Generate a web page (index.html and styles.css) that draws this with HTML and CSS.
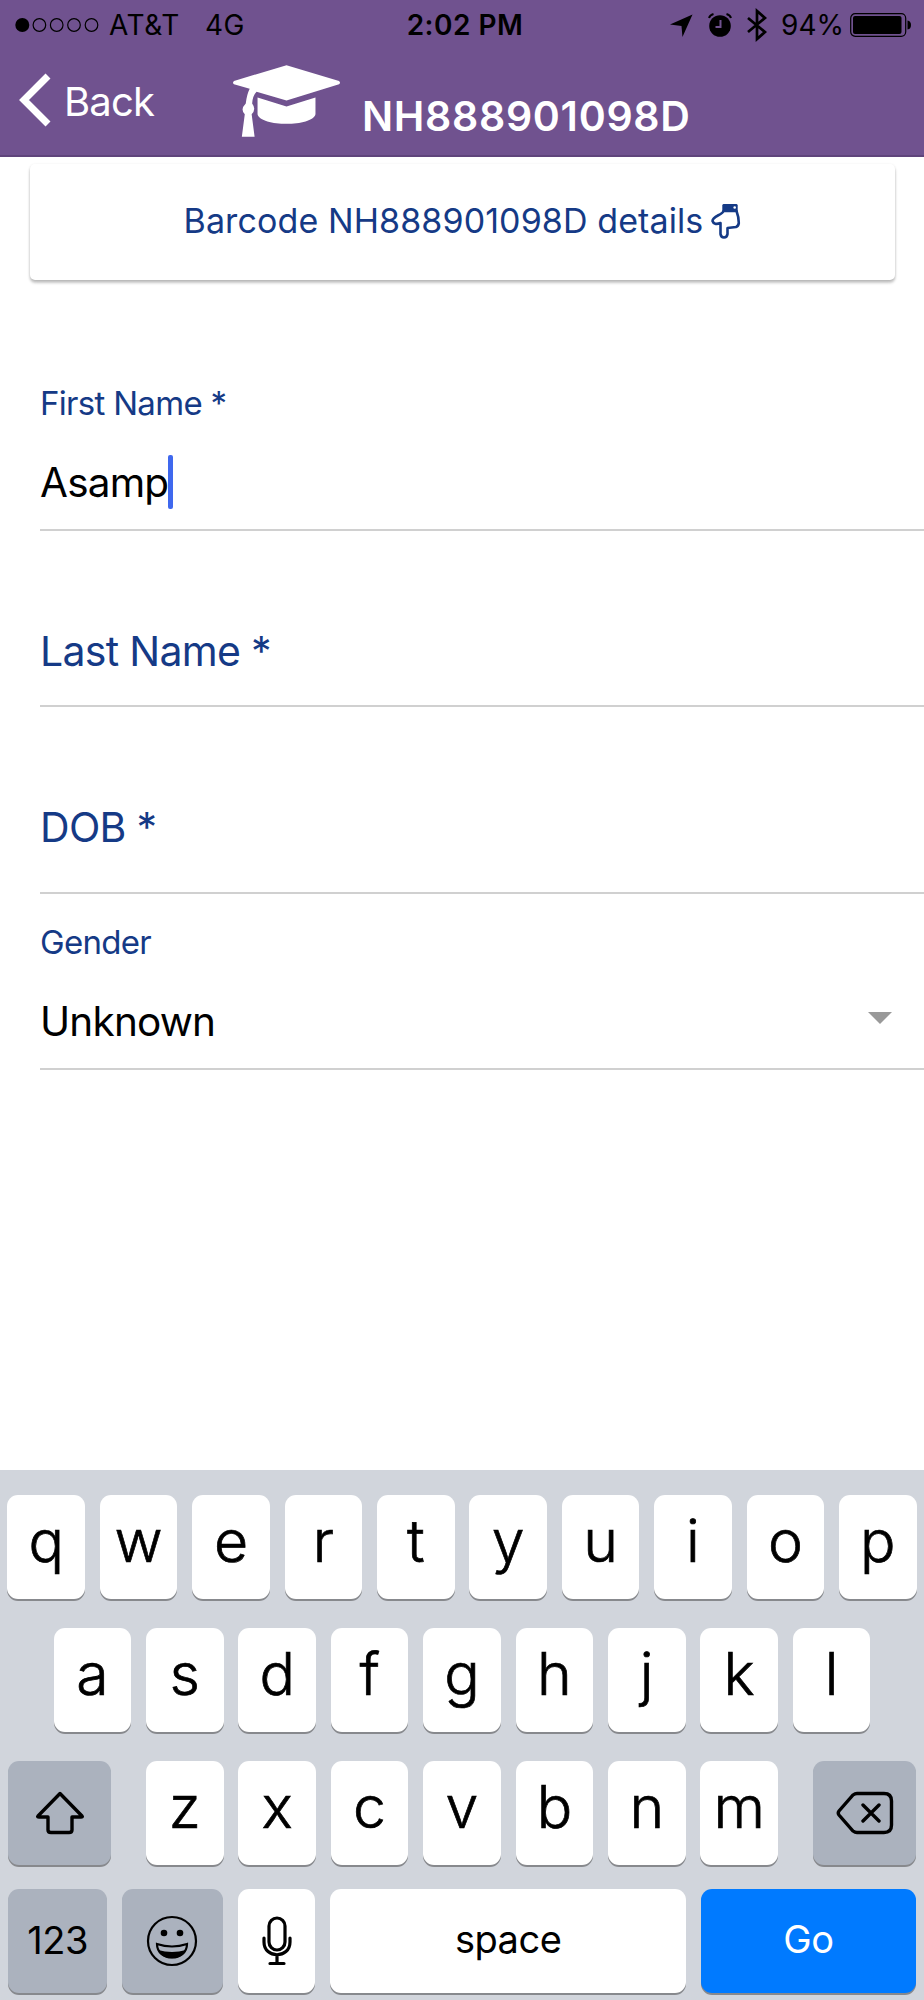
FILE: index.html
```html
<!DOCTYPE html>
<html lang="en">
<head>
<meta charset="utf-8">
<title>NH888901098D</title>
<link rel="stylesheet" href="styles.css">
</head>
<body>
<div class="screen">
  <header class="header">
    <div class="status">
      <div class="status-left">
        <svg class="signal" width="84" height="16" viewBox="0 0 84 16"><circle cx="7.3" cy="8" r="7"/><g fill="none" stroke="#000" stroke-width="1.2"><circle cx="24.4" cy="8" r="6.3"/><circle cx="41.7" cy="8" r="6.3"/><circle cx="59" cy="8" r="6.3"/><circle cx="76.5" cy="8" r="6.3"/></g></svg>
        <span class="carrier">AT&amp;T</span><span class="network">4G</span>
      </div>
      <span class="time">2:02 PM</span>
      <div class="status-right">
        <svg width="23" height="23" viewBox="0 0 24 24"><path d="M23.500 .5 13 24 12 12.500 0 11Z"/></svg>
        <svg width="26" height="26" viewBox="0 0 26 26"><circle cx="13" cy="14" r="10.800"/><path d="M13.500 8v7H8.500" fill="none" stroke="#70528f" stroke-width="2"/><path d="M2 6Q3 3 6.500 2M24 6Q23 3 19.500 2" fill="none" stroke="#000" stroke-width="2"/></svg>
        <svg width="20" height="34" viewBox="0 0 20 34"><path d="M1 10 18 24 10 31V3L18 10 1 24" fill="none" stroke="#000" stroke-width="2.700"/></svg>
        <span class="percent">94%</span>
        <svg width="62" height="24" viewBox="0 0 62 24"><rect x=".7" y=".7" width="55" height="22.600" rx="4.500" fill="none" stroke="#000" stroke-width="1.200"/><rect x="3" y="3" width="48.500" height="18" rx="2"/><path d="M57.500 7.500Q61 8 61 12T57.500 16.500Z"/></svg>
      </div>
    </div>
    <div class="navbar">
      <svg class="chevron" width="32" height="54" viewBox="0 0 32 54"><path d="M29 3 5 27 29 51" fill="none" stroke="#fff" stroke-width="7"/></svg>
      <span class="back">Back</span>
      <svg class="cap" width="108" height="73" viewBox="0 0 110 74"><path fill="#fff" d="M54.500 0 108 16Q110 18 108 19.500L54.500 36 24 27Q20 31 19.500 39Q24 45 19 50L22 73H9L12 50Q7 45 13 39Q14 30 17 24L1 19.500Q-1 18 1 16ZM25 33 54.500 42 84 33V50C81 63 28 63 25 50Z"/></svg>
      <h1 class="title">NH888901098D</h1>
    </div>
  </header>

  <main class="form">
    <div class="card">
      <span class="card-text">Barcode NH888901098D details</span>
      <svg class="hand" width="30" height="36" viewBox="0 0 30 36"><path d="M12.500 8C11.500 12 1.500 13 1.500 18Q3 22.500 9.500 20V31Q10 34.500 13 34.500T16.500 31V25L25 24Q27.500 23 27.800 20Q27.800 14 25.500 8Z" fill="none" stroke="#153a86" stroke-width="2.600" stroke-linejoin="round"/><path d="M12.500 1H25.500Q26.700 1 26.700 2.500V9H11.300V2.500Q11.300 1 12.500 1Z" fill="#153a86"/><circle cx="23.700" cy="4.500" r="1.300" fill="#fff"/></svg>
    </div>
    <div class="field field-first">
      <label class="label-small first-label">First Name *</label>
      <div class="value"><span class="first-value">Asamp</span><i class="caret"></i></div>
    </div>
    <div class="field field-last"><label class="label-large last-label">Last Name *</label></div>
    <div class="field field-dob"><label class="label-large dob-label">DOB *</label></div>
    <div class="field field-gender">
      <label class="label-small gender-label">Gender</label>
      <div class="value"><span class="gender-value">Unknown</span><svg class="arrow" width="24" height="12" viewBox="0 0 24 12"><path d="M0 0H24L12 12Z" fill="#999"/></svg></div>
    </div>
  </main>

  <section class="keyboard">
    <div class="row row-top"><b class="key">q</b><b class="key">w</b><b class="key">e</b><b class="key">r</b><b class="key">t</b><b class="key">y</b><b class="key">u</b><b class="key">i</b><b class="key">o</b><b class="key">p</b></div>
    <div class="row row-home"><b class="key">a</b><b class="key">s</b><b class="key">d</b><b class="key">f</b><b class="key">g</b><b class="key">h</b><b class="key">j</b><b class="key">k</b><b class="key">l</b></div>
    <div class="row row-spread">
      <b class="key key-dark key-side"><svg width="50" height="44" viewBox="0 0 50 44"><path d="M25 2.500 47 25Q48 26 46 26H37V39Q37 41.500 34 41.500H16Q13 41.500 13 39V26H4Q2 26 3 25Z" fill="none" stroke="#000" stroke-width="3.400" stroke-linejoin="round"/></svg></b>
      <div class="row"><b class="key">z</b><b class="key">x</b><b class="key">c</b><b class="key">v</b><b class="key">b</b><b class="key">n</b><b class="key">m</b></div>
      <b class="key key-dark key-side"><svg width="58" height="44" viewBox="0 0 58 44"><path d="M21 2.500H48Q55.500 2.500 55.500 10V34Q55.500 41.500 48 41.500H21Q19 41.500 17 40L3 24Q1.500 22 3 20L17 4Q19 2.500 21 2.500ZM27 14 43 30M43 14 27 30" fill="none" stroke="#000" stroke-width="3.400" stroke-linecap="round"/></svg></b>
    </div>
    <div class="row row-bottom">
      <b class="key key-dark key-num"><span>123</span></b>
      <b class="key key-dark key-emoji"><svg width="52" height="52" viewBox="0 0 52 52"><circle cx="26" cy="26" r="24" fill="none" stroke="#000" stroke-width="2.200"/><circle cx="18" cy="18" r="3.300"/><circle cx="34" cy="18" r="3.300"/><path d="M11 29Q26 34 41 29C41 47 11 47 11 29Z" fill="none" stroke="#000" stroke-width="2.200"/><path d="M12 35Q26 39 40 35C36 46 16 46 12 35Z"/></svg></b>
      <b class="key"><svg width="30" height="50" viewBox="0 0 30 50"><g fill="none" stroke="#000" stroke-width="3.200" stroke-linecap="round"><rect x="7" y="2" width="16" height="32" rx="8"/><path d="M2 22V26C2 43 28 43 28 26V22M15 39V47M8 47.500H22"/></g></svg></b>
      <b class="key key-space"><span>space</span></b>
      <b class="key key-go"><span>Go</span></b>
    </div>
  </section>
</div>
</body>
</html>
```
FILE: styles.css
```css
* { box-sizing: border-box; }
body { margin: 0; font-family: Inter, "Liberation Sans", sans-serif; background: #fff; }
svg { display: block; flex: none; }
.screen { width: 924px; height: 2000px; display: flex; flex-direction: column; overflow: hidden; }
.header { height: 157px; flex: none; background: #70528f; border-bottom: 2px solid #5f447b; }
.status { height: 50px; display: grid; grid-template-columns: 1fr auto 1fr; align-items: center; padding: 0 12px 0 15px; font-size: 28px; line-height: 50px; color: #000; white-space: nowrap; }
.status-left, .status-right { display: flex; align-items: center; }
.status-right { justify-content: flex-end; gap: 14px; }
.carrier { margin-left: 10px; letter-spacing: .6px; }
.network { margin-left: 25px; letter-spacing: .5px; }
.time { font-weight: 600; letter-spacing: .5px; margin-left: 3px; }
.percent { margin-right: -8px; }
.navbar { height: 105px; display: flex; align-items: flex-start; padding-left: 19px; color: #fff; white-space: nowrap; }
.chevron { margin-top: 23px; }
.back { margin: 27px 0 0 13px; width: 90px; font-size: 40px; line-height: 50px; letter-spacing: -.8px; }
.cap { margin: 15px 0 0 79px; }
.title { margin: 41px 0 0 21px; font-size: 41px; line-height: 50px; font-weight: 600; letter-spacing: .7px; }
.form { flex: 1; }
.card { margin: 7px 29px 0 30px; height: 116px; border-radius: 5px; display: flex; justify-content: center; padding-top: 37px; box-shadow: 0 3px 3px rgba(0,0,0,.2), 0 1px 3px rgba(0,0,0,.14); color: #153a86; }
.card-text { font-size: 34px; line-height: 40px; white-space: nowrap; letter-spacing: .1px; }
.hand { margin: 2px 0 0 8px; }
.field { margin-left: 40px; border-bottom: 2px solid #d0d0d0; display: flex; flex-direction: column; }
.field-first { height: 251px; padding-top: 103px; }
.field-last { height: 176px; padding-top: 95px; }
.field-dob { height: 187px; padding-top: 95px; }
.field-gender { height: 176px; padding-top: 28px; }
.label-small { font-size: 33px; line-height: 40px; color: #153a86; letter-spacing: -.7px; }
.label-large { font-size: 41px; line-height: 50px; color: #153a86; letter-spacing: -.7px; }
.value { display: flex; align-items: center; margin-top: 35px; font-size: 40.500px; line-height: 50px; color: #000; letter-spacing: -.8px; }
.caret { width: 5px; height: 54px; margin: -3px 0 -1px; background: #3f68ee; border-radius: 2px; }
.arrow { margin: -9px 32px 0 auto; }
.keyboard { height: 530px; flex: none; padding: 25px 8px 0; background: #d1d5dc; display: flex; flex-direction: column; gap: 29px; }
.row { display: flex; justify-content: center; gap: 14.800px; }
.row-spread { justify-content: space-between; }
.row-bottom { margin-top: -5px; }
.key { width: 77.600px; height: 104px; border-radius: 11px; background: #fff; box-shadow: 0 2px 0 #87898d; display: flex; align-items: center; justify-content: center; flex: none; padding-bottom: 13px; font-size: 59px; line-height: 72px; font-weight: 300; -webkit-text-stroke: .7px #000; color: #000; }
.key svg { margin-top: 13px; }
.key-dark { background: #abb2be; }
.key-side { width: 103px; }
.key-num { width: 99px; }
.key-emoji { width: 101px; }
.key-space { width: 356px; }
.key-go { width: 215px; background: #007aff; color: #fff; }
.key-num, .key-space, .key-go { font-size: 38px; font-weight: 400; -webkit-text-stroke: 0; padding-bottom: 5px; letter-spacing: -.5px; }
.key-num { padding-bottom: 3px; }
```
